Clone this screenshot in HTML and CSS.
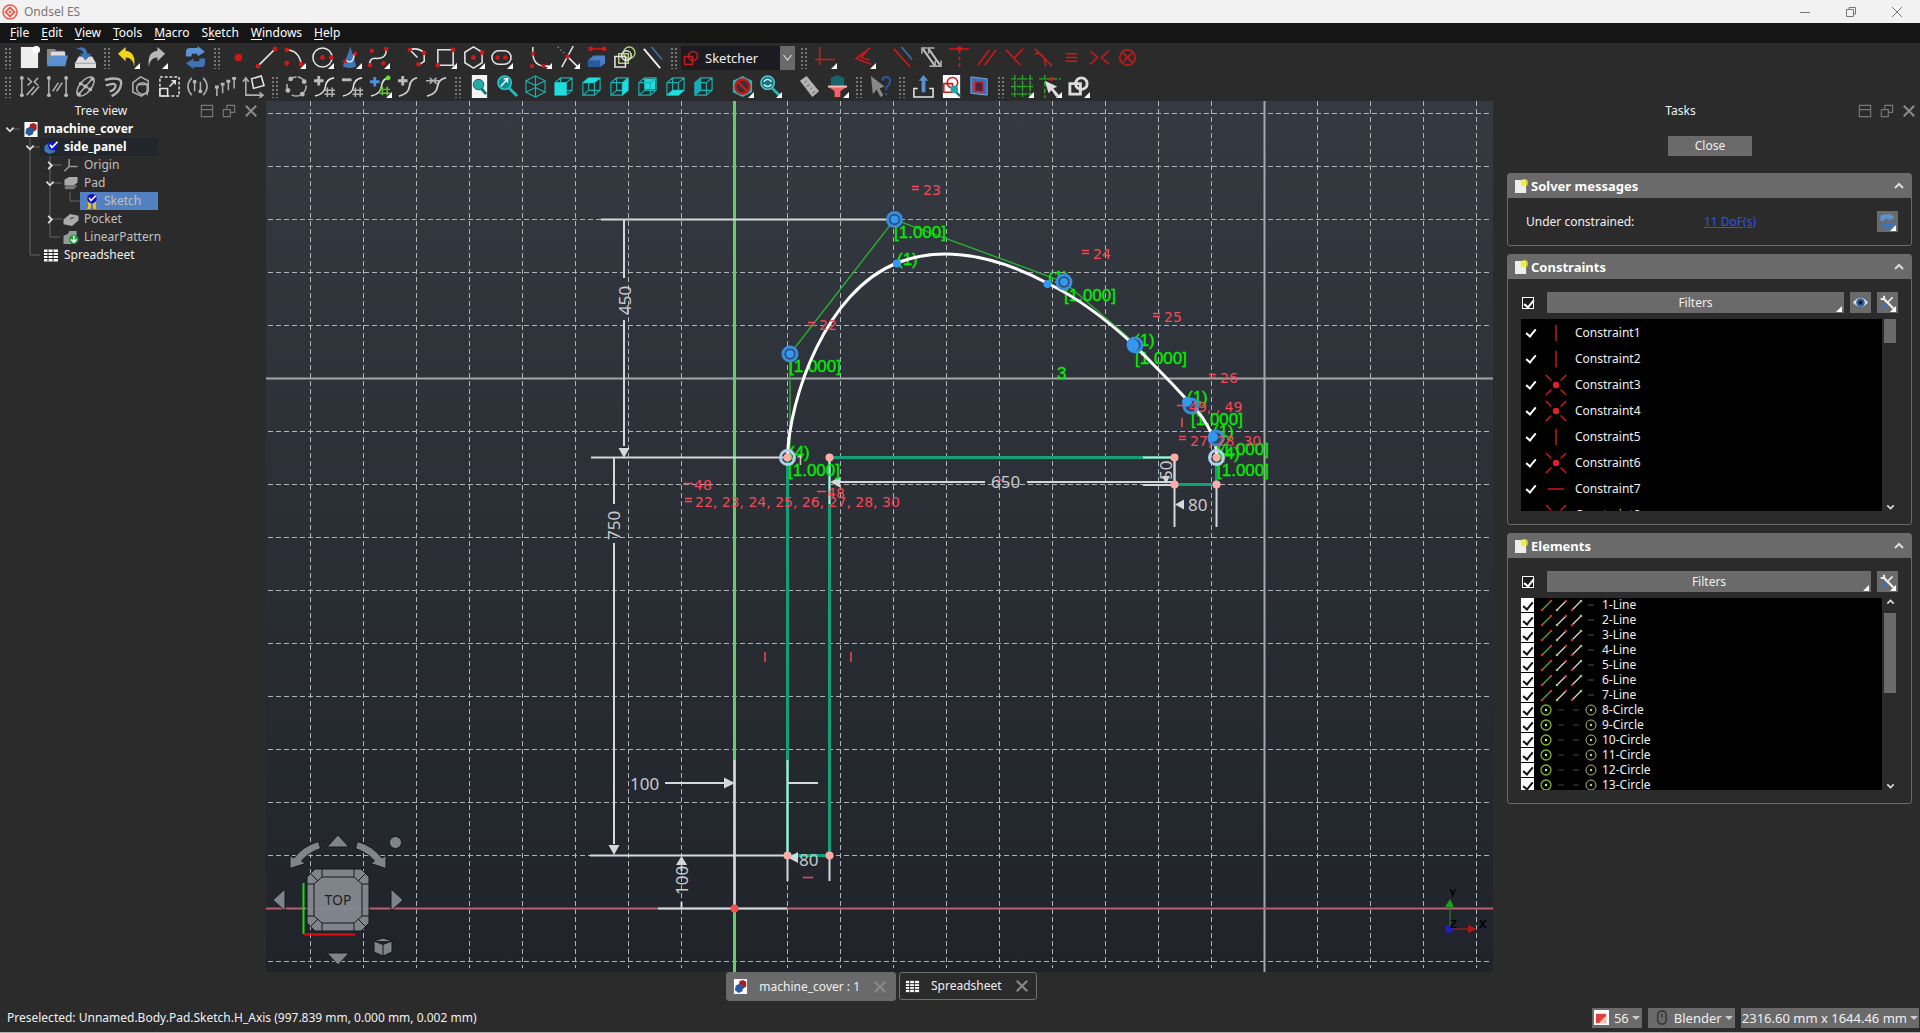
FILE: index.html
```html
<!DOCTYPE html>
<html lang="en">
<head>
<meta charset="utf-8">
<title>Ondsel ES</title>
<link rel="stylesheet" href="styles.css">
</head>
<body>
<svg class="defs" aria-hidden="true">
  <symbol id="cube" viewBox="0 0 24 24"><path class="t" d="M3 8 9 3H21V16L15 21H3ZM3 8H15V21M15 8 21 3M9 3V16H21M9 16 3 21"/></symbol>
  <symbol id="sync" viewBox="0 0 24 24"><path d="M2 11V6a4 4 0 0 1 4-4h8V0l8 6-8 5V8H8v3Z" fill="#5b93d0"/><path d="M22 13v5a4 4 0 0 1-4 4h-8v2l-8-6 8-5v3h6v-3Z" fill="#3f74b6"/></symbol>
  <symbol id="note" viewBox="0 0 14 16"><path d="M0 1H12V15H0Z" fill="#eee"/><circle cx="10" cy="4" r="4" fill="#f0ec20" opacity=".75"/></symbol>
  <symbol id="tools" viewBox="0 0 20 20"><path d="M3 17 10 10" stroke="#3f74b6" stroke-width="3.400"/><path d="M10 10 16 4" stroke="#eee" stroke-width="1.800"/><path d="M6 6 17 17" stroke="#eee" stroke-width="2.600"/><path d="M2 6H6V2" stroke="#eee" stroke-width="2.400" fill="none"/></symbol>
  <symbol id="float" viewBox="0 0 16 16"><path d="M1.500 1.500h13v13h-13ZM1.500 6.500h13" fill="none" stroke="#777" stroke-width="1.300"/></symbol>
  <symbol id="restore" viewBox="0 0 16 16"><path d="M1.500 6.500h8v8h-8ZM5.500 6V1.500h9v8H10" fill="none" stroke="#777" stroke-width="1.300"/></symbol>
  <symbol id="x" viewBox="0 0 16 16"><path d="M2 2 14 14M14 2 2 14" stroke="#8a8a8a" stroke-width="2.400"/></symbol>
  <symbol id="up" viewBox="0 0 10 10"><path d="M1 7 5 3 9 7" fill="none" stroke="#ddd" stroke-width="2"/></symbol>
  <symbol id="down" viewBox="0 0 10 10"><path d="M1 3 5 7 9 3" fill="none" stroke="#ddd" stroke-width="2"/></symbol>
  <symbol id="right" viewBox="0 0 10 10"><path d="M3 1 7 5 3 9" fill="none" stroke="#ddd" stroke-width="2"/></symbol>
  <symbol id="app" viewBox="0 0 14 16"><path d="M0 0H14V16H0Z" fill="#fff"/><path d="M6 2 10 1 13 3 13 8 9 11 5 8Z" fill="#b01c1c"/><path d="M2 7 6 5 10 7 9 13 5 15 1 12Z" fill="#2a5a9e"/></symbol>
  <symbol id="sheet" viewBox="0 0 16 14"><path d="M1 1H15V13H1Z" fill="#fff"/><path d="M1 4H15M1 7H15M1 10H15M5 1V13M10 1V13" stroke="#222"/></symbol>
  <symbol id="vert" viewBox="0 0 24 24"><path class="r" d="M12 3V21"/></symbol>
  <symbol id="horiz" viewBox="0 0 24 24"><path class="r" d="M3 12H21"/></symbol>
  <symbol id="coin" viewBox="0 0 24 24"><path class="r" d="M1 1 7 7M23 1 17 7M1 23 7 17M23 23 17 17"/><circle cx="12" cy="12" r="3.500" fill="#e02030"/></symbol>
  <symbol id="lines" viewBox="0 0 60 15"><g stroke-width="1.200"><path d="M2 13 11 4" stroke="#58b030"/><path d="M17 13 26 4M32 13 41 4" stroke="#e6e0d8"/><path d="M48 8h6" stroke="#444"/></g><g fill="#d03030"><circle cx="2" cy="13" r="1.300"/><circle cx="11" cy="4" r="1.300"/><circle cx="26" cy="4" r="1.300"/><circle cx="32" cy="13" r="1.300"/></g><circle cx="17" cy="13" r="1.300" fill="#9c6"/><circle cx="41" cy="4" r="1.300" fill="#9c6"/></symbol>
  <symbol id="circ" viewBox="0 0 60 15"><g fill="none"><circle cx="6" cy="8" r="5" stroke="#7db82c" stroke-width="1.300"/><circle cx="51" cy="8" r="5" stroke="#b8b878"/><path d="M18 8h6M33 8h6" stroke="#444"/></g><circle cx="6" cy="8" r="1.200" fill="#cf8"/><circle cx="51" cy="8" r="1.200" fill="#cc6"/></symbol>
</svg>

<header class="titlebar">
  <svg class="logo" viewBox="0 0 16 16"><circle cx="8" cy="8" r="7" fill="none" stroke="#ef5a4a" stroke-width="1.500"/><path d="M8 3.500 12.500 8 8 12.500 3.500 8Z" fill="none" stroke="#ef5a4a" stroke-width="1.800"/><circle cx="8" cy="8" r="1.200" fill="#ef5a4a"/></svg>
  <span class="title">Ondsel ES</span>
  <button class="win" aria-label="Minimize"><svg viewBox="0 0 12 12"><path d="M1 6.500H11"/></svg></button>
  <button class="win" aria-label="Restore"><svg viewBox="0 0 12 12"><path d="M1.500 3.500h7v7h-7ZM4 3V1.500h6.500V8H9"/></svg></button>
  <button class="win" aria-label="Close window"><svg viewBox="0 0 12 12"><path d="M1 1 11 11M11 1 1 11"/></svg></button>
</header>

<nav class="menubar">
  <button><u>F</u>ile</button><button><u>E</u>dit</button><button><u>V</u>iew</button><button><u>T</u>ools</button><button><u>M</u>acro</button><button>S<u>k</u>etch</button><button><u>W</u>indows</button><button><u>H</u>elp</button>
</nav>

<div class="toolbars">
  <div class="bar">
    <i class="grip"></i>
    <button class="tool" aria-label="New"><svg viewBox="0 0 24 24"><path d="M3 1H21V23H3Z" fill="#eee"/><circle cx="19" cy="4" r="4" fill="#fff"/></svg></button>
    <button class="tool" aria-label="Open"><svg viewBox="0 0 24 24"><path d="M1 3H9L11 5H19V19H1Z" fill="#888"/><path d="M5 6H20V12H5Z" fill="#ddd"/><path d="M4 10H23L20 21H1Z" fill="#5a8fd0"/></svg></button>
    <button class="tool" aria-label="Save"><svg viewBox="0 0 24 24"><path d="M5 11H19L23 18V23H1V18Z" fill="#ddd"/><path d="M1 18H23" stroke="#999"/><path d="M2 3Q12-2 14 8H18L12 15 6 8H10Q9 3 2 3Z" fill="#3f74b6"/></svg></button>
    <i class="grip"></i>
    <button class="tool drop" aria-label="Undo"><svg viewBox="0 0 24 24"><path d="M1 8 9 1V5Q20 6 18 22 17 12 9 12V16Z" fill="#f0d418"/></svg></button>
    <button class="tool drop" aria-label="Redo"><svg viewBox="0 0 24 24"><path d="M21 8 13 1V5Q2 6 4 22 5 12 13 12V16Z" fill="#b8b8b8"/></svg></button>
    <i class="sep"></i>
    <button class="tool" aria-label="Refresh"><svg><use href="#sync"/></svg></button>
    <i class="grip"></i>
    <button class="tool" aria-label="Point"><svg viewBox="0 0 24 24"><circle class="fr" cx="12" cy="12" r="4"/></svg></button>
    <button class="tool" aria-label="Line"><svg viewBox="0 0 24 24"><path class="w" d="M3 21 21 3"/><circle class="fr" cx="3" cy="21" r="2.500"/><circle class="fr" cx="21" cy="3" r="2.500"/></svg></button>
    <button class="tool drop" aria-label="Arc"><svg viewBox="0 0 24 24"><path class="w" d="M4 4Q17 5 19 19"/><circle class="fr" cx="4" cy="4" r="2.500"/><circle class="fr" cx="4" cy="18" r="2.500"/><circle class="fr" cx="19" cy="19" r="2.500"/></svg></button>
    <button class="tool drop" aria-label="Circle"><svg viewBox="0 0 24 24"><circle class="w" cx="12" cy="12" r="10"/><circle class="fr" cx="12" cy="12" r="2.500"/><circle class="fr" cx="21" cy="12" r="2.500"/></svg></button>
    <button class="tool drop" aria-label="Conic"><svg viewBox="0 0 24 24"><path d="M12 1 18 21Q12 25 4 21Z" fill="#3f74b6"/><path class="w" d="M7 15Q15 20 16 8"/><circle class="fr" cx="6" cy="16" r="2"/><circle class="fr" cx="17" cy="8" r="2"/></svg></button>
    <button class="tool drop" aria-label="B-spline"><svg viewBox="0 0 24 24"><path class="w" d="M3 20Q2 12 10 13 21 13 20 3"/><circle class="fr" cx="3" cy="20" r="2.300"/><circle class="fr" cx="5" cy="5" r="2.300"/><circle class="fr" cx="17" cy="18" r="2.300"/><circle class="fr" cx="20" cy="3" r="2.300"/></svg></button>
    <i class="sep"></i>
    <button class="tool" aria-label="Polyline"><svg viewBox="0 0 24 24"><path class="w" d="M13 20 19 16V7Q12 1 4 4L12 12"/><circle class="fr" cx="4" cy="4" r="2.300"/><circle class="fr" cx="19" cy="7" r="2.300"/><circle class="fr" cx="13" cy="19" r="2.300"/></svg></button>
    <button class="tool drop" aria-label="Rectangle"><svg viewBox="0 0 24 24"><path class="w" d="M4 4H20V20H4Z"/><circle class="fr" cx="20" cy="4" r="2.400"/><circle class="fr" cx="4" cy="20" r="2.400"/></svg></button>
    <button class="tool drop" aria-label="Polygon"><svg viewBox="0 0 24 24"><path class="w" d="M12 1 21 6.500V17.500L12 23 3 17.500V6.500Z"/><circle class="fr" cx="12" cy="12" r="2.500"/><circle class="fr" cx="21" cy="7" r="2.500"/></svg></button>
    <button class="tool drop" aria-label="Slot"><svg viewBox="0 0 24 24"><rect class="w" x="2" y="5" width="20" height="14" rx="7"/><circle class="fr" cx="8" cy="12" r="2.400"/><circle class="fr" cx="16" cy="12" r="2.400"/></svg></button>
    <i class="sep"></i>
    <button class="tool drop" aria-label="Fillet"><svg viewBox="0 0 24 24"><path class="w" d="M4 1V9Q5 19 14 21H21"/><circle class="fr" cx="4" cy="8" r="2.200"/><circle class="fr" cx="3" cy="21" r="2.200"/><circle class="fr" cx="15" cy="21" r="2.200"/></svg></button>
    <button class="tool drop" aria-label="Trim"><svg viewBox="0 0 24 24"><path class="w" d="M17 0 5 22M10 10 22 22"/><path class="g" stroke-dasharray="1 3" d="M1 1 9 9"/><circle class="fr" cx="11" cy="11" r="2.300"/></svg></button>
    <button class="tool" aria-label="External geometry"><svg viewBox="0 0 24 24"><path d="M3 15 9 10H21V18L16 22H3Z" fill="#4a80c8"/><path d="M3 15H16V22H3Z" fill="#2d5a9c"/><path class="r" d="M6 3H18"/><circle class="fr" cx="6" cy="3" r="2.400"/><circle class="fr" cx="20" cy="3" r="2.400"/></svg></button>
    <button class="tool" aria-label="Carbon copy"><svg viewBox="0 0 24 24"><g fill="none" stroke="#b4d070" stroke-width="1.500"><path d="M6 8H16V18H6Z"/><circle cx="17" cy="7" r="6"/></g><path class="w" d="M2 11H13V22H2Z"/><circle class="w" cx="14" cy="10" r="5"/></svg></button>
    <button class="tool" aria-label="Construction"><svg viewBox="0 0 24 24"><path d="M3 3 20 23" stroke="#eee" stroke-width="2"/><path d="M11 1 22 14" stroke="#3f74b6" stroke-width="1.500"/></svg></button>
    <i class="grip"></i>
    <label class="workbench"><svg viewBox="0 0 16 16"><path d="M1.500 6.500h8v8h-8Z" fill="none" stroke="#c81a1a" stroke-width="1.600"/><circle cx="10" cy="6" r="4.500" fill="none" stroke="#c81a1a" stroke-width="1.600"/></svg>
      <select aria-label="Workbench"><option>Sketcher</option></select><svg class="chev" viewBox="0 0 12 12"><path d="M2 3 6 8 10 3" fill="none" stroke="#ddd" stroke-width="1.200"/></svg></label>
    <i class="grip"></i>
    <button class="tool drop" aria-label="Coincident"><svg viewBox="0 0 24 24"><path class="r" d="M6 1V20M1 14H22"/></svg></button>
    <i class="sep"></i>
    <button class="tool drop" aria-label="Dimension"><svg viewBox="0 0 24 24"><path class="r" d="M18 2 3 13 19 19M14 6 8 12 18 15"/></svg></button>
    <i class="sep"></i>
    <button class="tool" aria-label="Symmetric"><svg viewBox="0 0 24 24"><path class="r" d="M2 3 19 22"/><path d="M10 1 21 14" stroke="#3f74b6" stroke-width="1.500"/></svg></button>
    <button class="tool" aria-label="Toggle driving"><svg viewBox="0 0 24 24"><path d="M3 3 15 20M9 3 21 20" stroke="#c4c4c4" stroke-width="2"/><path class="g" d="M2 8V2h6M10 21h6V15M22 15v6h-6M9 8V2h6"/></svg></button>
    <button class="tool" aria-label="Horizontal"><svg viewBox="0 0 24 24"><path class="r" d="M1 3H22"/><path class="r" stroke-dasharray="4 3" d="M12 4V22"/><circle class="fr" cx="12" cy="3" r="2.600"/></svg></button>
    <button class="tool" aria-label="Parallel"><svg viewBox="0 0 24 24"><path class="r" d="M2 20 14 4M9 20 21 4"/></svg></button>
    <button class="tool" aria-label="Perpendicular"><svg viewBox="0 0 24 24"><path class="r" d="M2 4 17 20M10 13 20 3"/></svg></button>
    <button class="tool" aria-label="Tangent curve"><svg viewBox="0 0 24 24"><path class="r" d="M3 3 21 21M3 8Q14 6 14 21"/></svg></button>
    <button class="tool" aria-label="Equal"><svg viewBox="0 0 24 24"><path class="r" d="M6 8H18M6 12H18M6 16H18"/></svg></button>
    <button class="tool" aria-label="Symmetry"><svg viewBox="0 0 24 24"><path class="r" d="M2 5 10 12 2 19M22 5 14 12 22 19"/></svg></button>
    <button class="tool" aria-label="Block"><svg viewBox="0 0 24 24"><circle class="r" cx="12" cy="12" r="8"/><path class="r" d="M7 7 17 17M17 7 7 17"/></svg></button>
  </div>
  <div class="bar">
    <i class="grip"></i>
    <button class="tool" aria-label="Select constraints"><svg viewBox="0 0 24 24"><path class="g" d="M4 3V21M10 3 14 7 10 11M21 3 17 7 21 11M9 21 17 12M14 21 22 12"/><circle class="fg" cx="4" cy="3" r="2"/><circle class="fg" cx="4" cy="21" r="2"/></svg></button>
    <button class="tool" aria-label="Select elements"><svg viewBox="0 0 24 24"><path class="g" d="M3 3V21M21 3V21M7 17 13 8M11 17 17 8"/><circle class="fg" cx="3" cy="3" r="2"/><circle class="fg" cx="3" cy="21" r="2"/><circle class="fg" cx="21" cy="3" r="2"/><circle class="fg" cx="21" cy="21" r="2"/></svg></button>
    <button class="tool" aria-label="Internal geometry"><svg viewBox="0 0 24 24"><ellipse class="g" cx="12" cy="12" rx="12" ry="6" transform="rotate(-50 12 12)"/><path class="g" d="M5 20 19 4M7 9 17 15"/><circle class="fg" cx="12" cy="12" r="2.200"/><circle class="fg" cx="7" cy="9" r="2"/><circle class="fg" cx="17" cy="15" r="2"/><circle class="fg" cx="5" cy="20" r="2"/><circle class="fg" cx="19" cy="4" r="2"/></svg></button>
    <button class="tool" aria-label="Offset"><svg viewBox="0 0 24 24"><path d="M3 5Q21 1 20 9 19 18 10 22M4 11Q15 7 14 12 13 16 8 17" fill="none" stroke="#b4b4b4" stroke-width="2.400"/></svg></button>
    <button class="tool" aria-label="Mirror"><svg viewBox="0 0 24 24"><path class="g" d="M3 8 11 2 19 6V17L12 22 3 18Z"/><circle class="g" cx="13" cy="14" r="6"/><path class="g" d="M8 10H18V21"/></svg></button>
    <button class="tool" aria-label="Scale"><svg viewBox="0 0 24 24"><path class="w" stroke-dasharray="3 2" d="M2 2H22V22H2Z"/><path class="w" d="M2 14H10V22H2ZM12 12 18 6M14 6H18V10"/></svg></button>
    <button class="tool" aria-label="Rotate"><svg viewBox="0 0 24 24"><path class="g" d="M6 3Q-2 12 6 21M18 3Q26 12 18 21M9 7V17M15 7V17"/><circle class="fg" cx="9" cy="7" r="2"/><circle class="fg" cx="15" cy="17" r="2"/></svg></button>
    <button class="tool" aria-label="Array"><svg viewBox="0 0 24 24"><path class="g" d="M3 12V22M9 9V19M15 6V16M21 3V14"/><path class="fg" d="M1 11h4v3H1zM7 8h4v3H7zM13 5h4v3h-4zM19 2h4v3h-4z"/></svg></button>
    <button class="tool" aria-label="Remove alignment"><svg viewBox="0 0 24 24"><path class="g" d="M4 4V21H21M1 7 4 3 7 7M18 18 22 21 18 24"/><path class="w" d="M10 4 20 1 23 11 12 14Z"/></svg></button>
    <i class="grip"></i>
    <button class="tool" aria-label="Convert to NURBS"><svg viewBox="0 0 24 24"><path class="g" stroke-dasharray="9 4" d="M12 2A10 10 0 1 0 22 12 10 10 0 0 0 12 2"/><circle class="fg" cx="6" cy="4" r="2.500"/><circle class="fg" cx="20" cy="7" r="2.500"/><circle class="fg" cx="3" cy="16" r="2.500"/><circle class="fg" cx="18" cy="20" r="2.500"/></svg></button>
    <button class="tool" aria-label="Increase degree"><svg viewBox="0 0 24 24"><path class="w" d="M2 22Q12 20 13 12 14 4 22 3"/><path d="M1 6H11M6 1V11" stroke="#bbb" stroke-width="3"/><path class="g" d="M15 13V23M20 13V23M12 16H23M12 20H23"/></svg></button>
    <button class="tool" aria-label="Decrease degree"><svg viewBox="0 0 24 24"><path class="w" d="M2 22Q12 20 13 12 14 4 22 3"/><path d="M1 5H11" stroke="#bbb" stroke-width="3"/><path class="g" d="M15 13V23M20 13V23M12 16H23M12 20H23"/></svg></button>
    <button class="tool drop" aria-label="Knot multiplicity"><svg viewBox="0 0 24 24"><path class="w" d="M2 22Q12 20 13 12 14 4 20 3"/><path d="M1 7H11M6 2V12" stroke="#4a90e0" stroke-width="3"/><circle cx="20" cy="3" r="2.500" fill="#6d3"/><path d="M14 12V21M19 12V21M11 15H22M11 19H22" stroke="#5c2" stroke-width="1.500"/></svg></button>
    <button class="tool" aria-label="Insert knot"><svg viewBox="0 0 24 24"><path d="M2 22Q12 20 13 12 14 4 21 3" fill="none" stroke="#ccc" stroke-width="2"/><path d="M1 6H11M6 1V11" stroke="#bbb" stroke-width="3"/></svg></button>
    <button class="tool" aria-label="Join curves"><svg viewBox="0 0 24 24"><path d="M2 22Q12 20 13 12 14 4 22 3" fill="none" stroke="#ccc" stroke-width="2"/><path class="g" d="M1 6H9M15 6H8M5 3 8 6 5 9M12 3 9 6 12 9"/></svg></button>
    <i class="grip"></i>
    <button class="tool" aria-label="Fit all"><svg viewBox="0 0 24 24"><path d="M4 0H20V24H4Z" fill="#f4f4f4"/><path d="M13 13 19 20" stroke="#0c7a80" stroke-width="3"/><circle cx="11" cy="10" r="5.500" fill="#28a8a8" stroke="#0c6268"/></svg></button>
    <button class="tool" aria-label="Fit selection"><svg viewBox="0 0 24 24"><path d="M13 13 22 22" stroke="#28b8c0" stroke-width="3"/><circle cx="9" cy="8" r="7" fill="#0c8c94" stroke="#30c8d0" stroke-width="1.500"/><path d="M5 12 12 4M8 4H12V8" stroke="#fff" stroke-width="1.500" fill="none"/></svg></button>
    <button class="tool" aria-label="Isometric"><svg viewBox="0 0 24 24"><path class="t" d="M12 1 22 6V18L12 23 2 18V6ZM2 6 12 11 22 6M12 11V23M12 1V13L2 18M12 13 22 18"/></svg></button>
    <button class="tool" aria-label="Front"><svg viewBox="0 0 24 24"><use href="#cube"/><path class="ft" d="M3 8H15V21H3Z"/></svg></button>
    <button class="tool" aria-label="Top"><svg viewBox="0 0 24 24"><use href="#cube"/><path class="ft" d="M3 8 9 3H21L15 8Z"/></svg></button>
    <button class="tool" aria-label="Right"><svg viewBox="0 0 24 24"><use href="#cube"/><path class="ft" d="M15 8 21 3V16L15 21Z"/></svg></button>
    <button class="tool" aria-label="Rear"><svg viewBox="0 0 24 24"><path class="ft" d="M9 4H20V15H9Z"/><use href="#cube"/></svg></button>
    <button class="tool" aria-label="Bottom"><svg viewBox="0 0 24 24"><use href="#cube"/><path class="ft" d="M3 21 9 16H21L15 21Z"/></svg></button>
    <button class="tool" aria-label="Left"><svg viewBox="0 0 24 24"><path d="M3 8 9 3V16L3 21Z" fill="#159"/><path class="ft" opacity=".6" d="M3 8 9 3V16L3 21Z"/><use href="#cube"/></svg></button>
    <i class="sep"></i>
    <button class="tool drop" aria-label="Draw style"><svg viewBox="0 0 24 24"><path d="M12 1 22 6V18L12 23 2 18V6Z" fill="#28b8c0"/><circle cx="12" cy="12" r="7.500" fill="#333" stroke="#d01818" stroke-width="2.500"/><path d="M7 7 17 17" stroke="#d01818" stroke-width="2.500"/></svg></button>
    <button class="tool drop" aria-label="Zoom"><svg viewBox="0 0 24 24"><path d="M14 14 22 22" stroke="#28b8c0" stroke-width="3"/><circle cx="9" cy="8" r="7" fill="#0f7880" stroke="#58c8cc" stroke-width="1.500"/><path d="M5 7q4-5 8 0M13 10q-4 4-8 0" stroke="#d8eeee" stroke-width="1.500" fill="none"/></svg></button>
    <i class="sep"></i>
    <button class="tool" aria-label="Measure"><svg viewBox="0 0 24 24"><path d="M2 6 9 1 22 17 15 23Z" fill="#b4b4b4"/><path d="M9 6 7 8M12 10 9 12M15 13 13 15M18 17 15 19" stroke="#555"/></svg></button>
    <button class="tool drop" aria-label="Filter"><svg viewBox="0 0 24 24"><path d="M5 3 12 0 19 3V12H5Z" fill="#14666a"/><path d="M2 12H22L15 17V23H9V17Z" fill="#f06468"/><path d="M2 12H22" stroke="#fbb" stroke-width="2"/></svg></button>
    <i class="grip"></i>
    <button class="tool" aria-label="What's this"><svg viewBox="0 0 24 24"><path d="M2 1 4 20 8 15 12 23 15 21 11 14 16 12Z" fill="#888"/><path d="M14 6Q14 2 18 2 22 2 22 6T18 13V16M18 19V21" fill="none" stroke="#2d5a9c" stroke-width="2"/></svg></button>
    <i class="grip"></i>
    <button class="tool" aria-label="Leave sketch"><svg viewBox="0 0 24 24"><path class="w" d="M6 14H2V23H22V14H18"/><path d="M12 0 17 6H14V18H10V6H7Z" fill="#5a8fd0"/></svg></button>
    <button class="tool" aria-label="View sketch"><svg viewBox="0 0 24 24"><path d="M3 0H21V24H3Z" fill="#fff"/><path class="r" d="M4 9H13V18H4Z"/><circle class="r" cx="13" cy="8" r="5.500"/><circle cx="15" cy="15" r="4" fill="#20a8b0"/><path d="M17 18 21 22" stroke="#0c7a80" stroke-width="2.500"/></svg></button>
    <button class="tool" aria-label="View section"><svg viewBox="0 0 24 24"><path d="M3 2 20 4V21L3 19Z" fill="#3d6cb4" stroke="#7ca8e0"/><path d="M7 7H16V18L7 17Z" fill="#50243a" stroke="#e02828" stroke-width="1.500"/></svg></button>
    <i class="grip"></i>
    <button class="tool drop" aria-label="Grid"><svg viewBox="0 0 24 24"><path d="M4 0V24M12 0V24M20 0V24M0 4H24M0 12H24M0 20H24" stroke="#2fa82f" stroke-width="1.400" stroke-dasharray="5 1"/></svg></button>
    <button class="tool drop" aria-label="Snap"><svg viewBox="0 0 24 24"><path d="M6 0V24M0 4H23" stroke="#2fa82f" stroke-width="1.400" stroke-dasharray="5 2"/><circle class="fr" cx="13" cy="4" r="2.200"/><path d="M6 6 19 12 15 14 21 21 18 23 13 16 10 19Z" fill="#ddd"/></svg></button>
    <button class="tool drop" aria-label="Rendering order"><svg viewBox="0 0 24 24"><path d="M3 9H14V20H3Z" fill="none" stroke="#ddd" stroke-width="3"/><circle cx="15" cy="9" r="6" fill="none" stroke="#ddd" stroke-width="3"/></svg></button>
  </div>
</div>

<main>
  <aside class="dock left">
    <div class="docktitle"><h2>Tree view</h2><button aria-label="Float"><svg><use href="#float"/></svg></button><button aria-label="Restore"><svg><use href="#restore"/></svg></button><button aria-label="Close"><svg><use href="#x"/></svg></button></div>
    <div class="treewrap">
      <svg class="links" viewBox="0 0 158 144"><path d="M30 18V135H40M50 36V117H60M70 72V81H80M50 45H62M50 63H62M50 99H62M12 9H20M32 27H40"/></svg>
      <ul class="tree">
        <li><svg class="arrow"><use href="#down"/></svg><span class="node bold"><svg><use href="#app"/></svg>machine_cover</span></li>
        <li class="d1"><svg class="arrow"><use href="#down"/></svg><span class="node bold active"><svg viewBox="0 0 16 16"><path d="M1 6 7 3 13 6 12 13 6 15 1 12Z" fill="#3f74b6"/><circle cx="10" cy="6" r="5" fill="#1010d0"/><path d="M7 5 9 8 15 2" fill="none" stroke="#fff" stroke-width="1.800"/></svg>side_panel</span></li>
        <li class="d2"><svg class="arrow"><use href="#right"/></svg><span class="node dim"><svg viewBox="0 0 16 16"><path d="M6 1V9H15M6 9 1 14" fill="none" stroke="#999" stroke-width="1.600"/></svg>Origin</span></li>
        <li class="d2"><svg class="arrow"><use href="#down"/></svg><span class="node dim"><svg viewBox="0 0 16 16"><path d="M1 4 6 1H15V7L11 10H1Z" fill="#aaa"/><path d="M1 12 4 10H15L11 14H2Z" fill="#777"/></svg>Pad</span></li>
        <li class="d3"><span class="arrow"></span><span class="node dim selected"><svg viewBox="0 0 16 16"><path d="M4 8H7Q9 12 7 16H4Q6 12 4 8M14 8H11Q9 12 11 16H14Q12 12 14 8" fill="#f0c020"/><circle cx="9" cy="5" r="5" fill="#1010d0"/><path d="M6 4 8 7 13 2" fill="none" stroke="#fff" stroke-width="1.600"/></svg>Sketch</span></li>
        <li class="d2"><svg class="arrow"><use href="#right"/></svg><span class="node dim"><svg viewBox="0 0 16 16"><path d="M0 8 7 2 16 4V9L9 15 0 13Z" fill="#aaa"/><path d="M6 7 10 5 12 6 8 8Z" fill="#666"/></svg>Pocket</span></li>
        <li class="d2"><span class="arrow"></span><span class="node dim"><svg viewBox="0 0 16 16"><path d="M0 6 5 4 6 1H14V7L8 15H0Z" fill="#999"/><circle cx="11" cy="10" r="5" fill="#18a030"/><path d="M11 6V13M8 10 11 13 14 10" stroke="#fff" stroke-width="1.600" fill="none"/></svg>LinearPattern</span></li>
        <li class="d1"><span class="arrow"></span><span class="node"><svg><use href="#sheet"/></svg>Spreadsheet</span></li>
      </ul>
    </div>
  </aside>

  <section class="center">
    <svg class="view" viewBox="266 101 1227 871" preserveAspectRatio="xMidYMid slice">
      <path class="grid" d="M310.500 101V968M363.500 101V968M416.500 101V968M469.500 101V968M522.500 101V968M575.500 101V968M628.500 101V968M681.500 101V968M787.500 101V968M840.500 101V968M893.500 101V968M946.500 101V968M999.500 101V968M1052.500 101V968M1105.500 101V968M1158.500 101V968M1211.500 101V968M1317.500 101V968M1370.500 101V968M1423.500 101V968M1476.500 101V968M268 113.500H1490M268 166.500H1490M268 219.500H1490M268 272.500H1490M268 325.500H1490M268 431.500H1490M268 484.500H1490M268 537.500H1490M268 590.500H1490M268 643.500H1490M268 696.500H1490M268 749.500H1490M268 802.500H1490M268 855.500H1490M268 961.500H1490"/>
      <path d="M266 378.500H1493M1264.500 101V972" stroke="#a4a6aa" stroke-width="2"/>
      <path d="M266 908.500H1493" stroke="#b8606c" stroke-width="2"/>
      <path d="M734.500 101V972" stroke="#5fd068" stroke-width="3"/>
      <g class="poly"><path d="M790 457V354L894.500 219.500 1064 282 1136 344 1192 407 1215 437 1216.500 457"/></g>
      <path d="M787.500 457V855.500H829.500V457.500H1174.500V484.500H1216.500V457" fill="none" stroke="#12a07a" stroke-width="3"/>
      <g class="dim">
        <path d="M601 219.500H894M624 220V278M624 320V446M591 457.500H787M614 458V504M614 543V844M590 855.500H787"/>
        <path d="M734.500 760V908M665 783H724M787.500 760V881M787.500 783H818M829.500 856V881M681.500 866V871M681.500 902V908M658 908.500H787"/>
        <path d="M829.500 458V504M840 482H985M1027 482H1174M1143 457.500H1174M1143 485H1174M1174.500 458V527M1216.500 485V527"/>
        <g class="head"><path d="M618.500 448H629.500L624 458ZM608.500 845H619.500L614 855ZM724 777.500V788.500L735 783ZM687 865H676L681.500 856ZM788 857.500 798 852V863ZM830 482 840 477V487.500ZM1175 504.500 1184 499.500V509.500ZM1162 476H1170L1166 484Z"/></g>
        <text transform="translate(631 315) rotate(-90)">450</text>
        <text transform="translate(620 540) rotate(-90)">750</text>
        <text transform="translate(688 895) rotate(-90)">100</text>
        <text transform="translate(1172 480) rotate(-90)">50</text>
        <text x="630" y="790">100</text><text x="799" y="866">80</text><text x="991" y="488">650</text><text x="1188" y="511">80</text>
      </g>
      <g class="weights">
        <text x="894" y="238">[1.000]</text><text x="897" y="265">(1)</text><text x="789" y="372">[1.000]</text><text x="789" y="458">(4)</text><text x="788" y="476">[1.000]</text>
        <text x="1048" y="283">(1)</text><text x="1064" y="301">[1.000]</text><text x="1134" y="346">(1)</text><text x="1135" y="364">[1.000]</text><text x="1187" y="403">(1)</text><text x="1191" y="425">[1.000]</text><text x="1213" y="437">(1)</text><text x="1217" y="455">[1.000]</text><text x="1219" y="459">(4)</text><text x="1217" y="476">[1.000]</text><text x="1057" y="379">3</text>
      </g>
      <path d="M787.500 457.500C789 398 826 291 897 263 930 250 980 247 1048 283.500 1080 299 1107 320 1134 345 1152 363 1172 383 1188 401 1199 411 1208 425 1213 437 1216 445 1217 451 1216.500 457.500" fill="none" stroke="#fff" stroke-width="3"/>
      <g class="poles"><circle cx="790" cy="354" r="7"/><circle cx="894.500" cy="219.500" r="7"/><circle cx="1064" cy="282" r="7"/><circle cx="1135" cy="345" r="7"/><circle cx="1191" cy="406" r="7"/><circle cx="1216" cy="438" r="7"/></g>
      <g fill="#3498f0"><circle cx="790" cy="354" r="4"/><circle cx="894.500" cy="219.500" r="4"/><circle cx="1064" cy="282" r="4"/><circle cx="897" cy="263.500" r="4"/><circle cx="1047.500" cy="284" r="4"/><circle cx="1133" cy="345.500" r="6"/><circle cx="1187" cy="402" r="5"/><circle cx="1213" cy="437" r="5"/></g>
      <g fill="none" stroke="#b4d0f0" stroke-width="3"><circle cx="787.500" cy="457.500" r="7"/><circle cx="1216.500" cy="457.500" r="7"/></g>
      <text class="one" x="796" y="465">1</text>
      <g fill="#ffaca8"><circle cx="787.500" cy="457.500" r="4"/><circle cx="829.500" cy="457.500" r="4"/><circle cx="1174.500" cy="457.500" r="4"/><circle cx="1216.500" cy="457.500" r="4"/><circle cx="1174.500" cy="484.500" r="4"/><circle cx="1216.500" cy="484.500" r="4"/><circle cx="787.500" cy="855.500" r="4"/><circle cx="829.500" cy="855.500" r="4"/></g>
      <circle cx="734.500" cy="908.500" r="4" fill="#f05048"/>
      <g class="cons">
        <path d="M912 186.500h7M912 189.500h7M808 322.500h7M808 325.500h7M683 483.500h10M817 491.500h9M685 498.500h7M685 501.500h7M1082 250.500h7M1082 253.500h7M1153 313.500h7M1153 316.500h7M1209 374.500h7M1209 377.500h7M1177 405.500h9M1182 418V427M1179 436.500h7M1179 439.500h7M765 652V662M851 652V662M803 877.500h10M998 480h4"/>
        <text x="923" y="195">23</text><text x="819" y="330">22</text><text x="694" y="490">48</text><text x="827" y="498">48</text><text x="695" y="507">22, 23, 24, 25, 26, 27, 28, 30</text>
        <text x="1093" y="259">24</text><text x="1164" y="322">25</text><text x="1220" y="383">26</text><text x="1189" y="412">49, , 49</text><text x="1190" y="446">27, 28, 30</text>
      </g>
      <g class="navcube">
        <path d="M338 835 349 847H327ZM327 953H349L338 965ZM273 900 285 889V911ZM403 900 391 889V911Z"/>
        <circle cx="395.500" cy="842.500" r="6"/>
        <path d="M318.500 841.500Q303 846 294 858L290 855.500V868.500L305.500 863.500 301.500 861Q308 853 320.500 848.500ZM357.500 841.500Q373 846 382 858L386 855.500V868.500L370.500 863.500 374.500 861Q368 853 355.500 848.500Z"/>
        <path d="M315 869H361L369 877V923L361 931H315L307 923V877ZM322 877H354L362 884V916L354 923H322L314 916V884ZM322 869V877M354 869V877M322 923V931M354 923V931M307 884H314M362 884H369M307 916H314M362 916H369M310 873 318 881M366 873 358 881M310 927 318 919M366 927 358 919"/>
        <path d="M374 941 383 938 392 941V952L383 956 374 952ZM374 941 383 944.500 392 941M383 944.500V956"/>
        <text x="338" y="905">TOP</text>
      </g>
      <path d="M303.500 883V934" stroke="#10e010" stroke-width="2"/><path d="M304 934.500H355" stroke="#e01010" stroke-width="2"/>
      <g class="triad"><path d="M1450 928V905" stroke="#2a8a38"/><path d="M1445 907H1454L1450 899Z" fill="#18a018"/><path d="M1450 929H1470" stroke="#b82020"/><path d="M1468 925V933L1477 929Z" fill="#b01818"/><circle cx="1449" cy="929" r="4" fill="#2020b8"/><text x="1449" y="897">Y</text><text x="1450" y="928">Z</text><text x="1479" y="928">X</text></g>
    </svg>
    <div class="tabs">
      <div class="tab current"><svg><use href="#app"/></svg><span>machine_cover : 1</span><button aria-label="Close tab"><svg><use href="#x"/></svg></button></div>
      <div class="tab"><svg><use href="#sheet"/></svg><span>Spreadsheet</span><button aria-label="Close tab"><svg><use href="#x"/></svg></button></div>
    </div>
  </section>

  <aside class="dock right">
    <div class="docktitle"><h2>Tasks</h2><button aria-label="Float"><svg><use href="#float"/></svg></button><button aria-label="Restore"><svg><use href="#restore"/></svg></button><button aria-label="Close"><svg><use href="#x"/></svg></button></div>
    <button class="close">Close</button>
    <section class="panel">
      <h3><svg class="ph"><use href="#note"/></svg><span>Solver messages</span><svg class="fold"><use href="#up"/></svg></h3>
      <div class="solver"><span class="state">Under constrained:</span><a href="#dofs">11 DoF(s)</a><button class="sq drop" aria-label="Update"><svg><use href="#sync"/></svg></button></div>
    </section>
    <section class="panel">
      <h3><svg class="ph"><use href="#note"/></svg><span>Constraints</span><svg class="fold"><use href="#up"/></svg></h3>
      <div class="filters"><input class="box" type="checkbox" checked aria-label="Filter constraints"><button class="filter drop">Filters</button><button class="sq" aria-label="Visibility"><svg viewBox="0 0 20 20"><path d="M1 10Q10-1 19 10 10 20 1 10" fill="#cfe0f4"/><circle cx="10" cy="10" r="5" fill="#2d5a9c"/><circle cx="10" cy="10" r="2" fill="#111"/></svg></button><button class="sq drop" aria-label="Settings"><svg><use href="#tools"/></svg></button></div>
      <div class="listrow">
        <ul class="list cl">
          <li><label><input type="checkbox" checked><svg><use href="#vert"/></svg>Constraint1</label></li>
          <li><label><input type="checkbox" checked><svg><use href="#vert"/></svg>Constraint2</label></li>
          <li><label><input type="checkbox" checked><svg><use href="#coin"/></svg>Constraint3</label></li>
          <li><label><input type="checkbox" checked><svg><use href="#coin"/></svg>Constraint4</label></li>
          <li><label><input type="checkbox" checked><svg><use href="#vert"/></svg>Constraint5</label></li>
          <li><label><input type="checkbox" checked><svg><use href="#coin"/></svg>Constraint6</label></li>
          <li><label><input type="checkbox" checked><svg><use href="#horiz"/></svg>Constraint7</label></li>
          <li><label><input type="checkbox" checked><svg><use href="#coin"/></svg>Constraint8</label></li>
        </ul>
        <div class="scroll"><span class="thumb short"></span><svg><use href="#down"/></svg></div>
      </div>
    </section>
    <section class="panel">
      <h3><svg class="ph"><use href="#note"/></svg><span>Elements</span><svg class="fold"><use href="#up"/></svg></h3>
      <div class="filters"><input class="box" type="checkbox" checked aria-label="Filter elements"><button class="filter drop">Filters</button><button class="sq drop" aria-label="Settings"><svg><use href="#tools"/></svg></button></div>
      <div class="listrow">
        <ul class="list el">
          <li><label><input type="checkbox" checked><svg><use href="#lines"/></svg>1-Line</label></li>
          <li><label><input type="checkbox" checked><svg><use href="#lines"/></svg>2-Line</label></li>
          <li><label><input type="checkbox" checked><svg><use href="#lines"/></svg>3-Line</label></li>
          <li><label><input type="checkbox" checked><svg><use href="#lines"/></svg>4-Line</label></li>
          <li><label><input type="checkbox" checked><svg><use href="#lines"/></svg>5-Line</label></li>
          <li><label><input type="checkbox" checked><svg><use href="#lines"/></svg>6-Line</label></li>
          <li><label><input type="checkbox" checked><svg><use href="#lines"/></svg>7-Line</label></li>
          <li><label><input type="checkbox" checked><svg><use href="#circ"/></svg>8-Circle</label></li>
          <li><label><input type="checkbox" checked><svg><use href="#circ"/></svg>9-Circle</label></li>
          <li><label><input type="checkbox" checked><svg><use href="#circ"/></svg>10-Circle</label></li>
          <li><label><input type="checkbox" checked><svg><use href="#circ"/></svg>11-Circle</label></li>
          <li><label><input type="checkbox" checked><svg><use href="#circ"/></svg>12-Circle</label></li>
          <li><label><input type="checkbox" checked><svg><use href="#circ"/></svg>13-Circle</label></li>
        </ul>
        <div class="scroll"><svg><use href="#up"/></svg><span class="thumb"></span><svg><use href="#down"/></svg></div>
      </div>
    </section>
  </aside>
</main>

<footer class="status">
  <span class="msg">Preselected: Unnamed.Body.Pad.Sketch.H_Axis (997.839 mm, 0.000 mm, 0.002 mm)</span>
  <button class="chip"><svg viewBox="0 0 16 16"><path d="M0 0H16V16H0Z" fill="#fff"/><path d="M2 4H13V14H2Z" fill="#e04040"/><path d="M13 6V14H5Z" fill="#f0c0b8"/></svg>56<i class="caret"></i></button>
  <label class="chip nav"><svg viewBox="0 0 16 16"><rect x="4" y="1" width="9" height="14" rx="4" fill="none" stroke="#333" stroke-width="1.500"/><path d="M8.500 4V8" stroke="#333" stroke-width="1.500"/></svg><select aria-label="Navigation style"><option>Blender</option></select><i class="caret"></i></label>
  <button class="chip size">2316.60 mm x 1644.46 mm<i class="caret"></i></button>
</footer>
</body>
</html>
```
FILE: styles.css
```css
* { box-sizing: border-box; }
body { margin: 0; height: 100vh; display: flex; flex-direction: column; overflow: hidden; background: #2b2b2b; color: #f0f0f0; font: 12px/18px "Noto Sans", "Open Sans", sans-serif; border-bottom: 1px solid #b0b0b0; }
button, select, input { font: inherit; color: inherit; margin: 0; padding: 0; border: 0; background: none; }
h2, h3, ul { margin: 0; padding: 0; font: inherit; list-style: none; }
svg { display: block; flex: none; }
.defs { position: absolute; width: 0; height: 0; }

.r { fill: none; stroke: #d01818; stroke-width: 1.6; }
.w { fill: none; stroke: #e4e4e4; stroke-width: 1.6; }
.g { fill: none; stroke: #b0b0b0; stroke-width: 1.6; }
.t { fill: none; stroke: #17b3b3; stroke-width: 1.2; }
.fr { fill: #d01818; }
.fg { fill: #b8b8b8; }
.ft { fill: #20dcdc; }

.titlebar { display: flex; align-items: center; height: 23px; background: #f2f2f2; color: #777; flex: none; }
.logo { width: 16px; height: 16px; margin: 0 6px 0 2px; }
.title { flex: 1; }
.win { width: 46px; display: flex; justify-content: center; }
.win svg { width: 12px; height: 12px; fill: none; stroke: #777; }

.menubar { display: flex; align-items: center; height: 20px; padding: 0 4px; background: #151515; flex: none; }
.menubar button { padding: 0 6px; color: #fff; }
.menubar u { text-underline-offset: 2px; }

.toolbars { flex: none; background: #2b2b2b; }
.bar { display: flex; align-items: center; height: 29px; }
.grip { flex: none; width: 15px; height: 22px; display: flex; background: radial-gradient(circle, #777 1px, transparent 1px) 0 0 / 4px 4px; border: 0 solid transparent; border-width: 0 3px 0 4px; background-clip: padding-box; }
.sep { flex: none; width: 11px; }
.tool { position: relative; flex: none; width: 28px; height: 24px; display: flex; justify-content: center; align-items: center; }
.tool svg { width: 23px; height: 23px; }
.drop { position: relative; }
.drop::after { content: ""; position: absolute; right: 2px; bottom: 1px; border: 3px solid transparent; border-right-color: #fff; border-bottom-color: #fff; }
.workbench { display: flex; align-items: center; flex: none; width: 114px; height: 24px; margin: 0 1px 0 0; background: #1c1b22; }
.workbench > svg { width: 16px; height: 16px; margin: 0 6px 0 2px; }
.workbench select { flex: 1; appearance: none; font-size: 13px; min-width: 0; }
.workbench .chev { width: 15px; height: 24px; margin: 0; padding: 6px 1px; background: #6a6a6a; }

main { display: flex; flex: 1; min-height: 0; }
.dock { flex: none; }
.left { width: 266px; padding-right: 4px; }
.right { width: 427px; padding-left: 14px; display: flex; flex-direction: column; }
.docktitle { display: flex; align-items: center; height: 19px; }
.docktitle h2 { flex: 1; text-align: center; }
.docktitle button { width: 22px; height: 19px; display: flex; align-items: center; justify-content: center; }
.docktitle svg { width: 14px; height: 14px; }
.left .docktitle h2 { padding-left: 6px; }

.treewrap { position: relative; width: 158px; }
.links { position: absolute; left: 0; top: 0; width: 158px; height: 144px; fill: none; stroke: #666; }
.tree { position: relative; }
.tree li { display: flex; height: 18px; align-items: center; }
.tree .d1 { padding-left: 20px; }
.tree .d2 { padding-left: 40px; }
.tree .d3 { padding-left: 60px; }
.arrow { flex: none; width: 20px; height: 9px; }
.node { display: flex; flex: 1; align-items: center; gap: 5px; height: 18px; padding-left: 3px; white-space: nowrap; }
.node svg { width: 16px; height: 15px; }
.bold { font-weight: bold; color: #fff; }
.node.dim { color: #c0c0c0; }
.active { background: #22262c; }
.selected { background: #5380c0; }

.center { flex: 1; min-width: 0; display: flex; flex-direction: column; }
.view { flex: 1; min-height: 0; width: 100%; background: linear-gradient(#353941, #20232a); }
.grid { fill: none; stroke: #b0b3b8; stroke-width: 1; stroke-dasharray: 5 3; }
.poly path { fill: none; stroke: #28b030; stroke-width: 1.4; }
.view .dim { fill: #c8cacc; }
.view .dim path { fill: none; stroke: #d4d8da; stroke-width: 2; }
.view .dim .head path { fill: #d4d8da; stroke: none; }
.view .dim text { font-size: 17px; }
.weights { fill: #00f000; stroke: #00f000; stroke-width: .3; font: 17px "Liberation Sans", sans-serif; }
.poles { fill: #2b4564; stroke: #3a8cdc; stroke-width: 3; }
.one { font-size: 14px; fill: #ddd; }
.cons { font: 14px "DejaVu Sans", sans-serif; fill: #f84854; }
.cons path { stroke: #f84854; stroke-width: 1.5; }
.navcube { fill: #858990; stroke: #16181c; stroke-width: 1; fill-opacity: .95; }
.navcube text { font-size: 14px; stroke: none; fill: #16181c; text-anchor: middle; }
.triad { font: bold 11px "Liberation Sans", sans-serif; fill: #000; }

.tabs { flex: none; display: flex; justify-content: center; gap: 3px; padding-left: 4px; height: 31px; align-items: flex-start; }
.tab { display: flex; align-items: center; height: 28px; padding: 0 5px; border: 1px solid #707070; border-radius: 3px; }
.tab > svg { width: 15px; height: 15px; margin-right: 11px; }
.tab button svg { width: 14px; height: 14px; margin: 0 2px 0 13px; }
.current { height: 29px; padding: 0 6px; background: #6a6a6a; border-color: #6a6a6a; }

.close { width: 84px; height: 20px; margin: 16px 0 17px 161px; background: #6a6a6a; }
.panel { margin: 0 8px 8px 0; border: 1px solid #6a6a6a; border-radius: 3px; }
.panel h3 { display: flex; align-items: center; height: 24px; padding: 0 7px; background: #6a6a6a; color: #fff; font-weight: bold; font-size: 13px; }
.ph { width: 13px; height: 15px; margin-right: 3px; }
.panel h3 span { flex: 1; }
.fold { width: 10px; height: 10px; }
.solver { display: flex; align-items: center; height: 47px; padding: 0 13px 0 18px; }
.state { width: 178px; }
.solver a { flex: 1; color: #2f55e8; }
.sq { width: 21px; height: 21px; background: #6a6a6a; display: flex; align-items: center; justify-content: center; }
.sq svg { width: 17px; height: 17px; }
.filters { display: flex; align-items: center; gap: 6px; padding: 13px 13px 6px 14px; }
.box { appearance: none; width: 12px; height: 12px; margin-right: 7px; border: 1px solid #fff; background: #1c1c1c; }
.filter { flex: 1; height: 21px; background: #6a6a6a; }
.listrow { display: flex; gap: 2px; padding: 0 15px 13px 13px; }
.list { flex: 1; height: 192px; overflow: hidden; background: #000; }
.list label { display: flex; align-items: center; }
.list input { appearance: none; flex: none; display: block; }
.box::before, .list input::before { content: ""; display: block; width: 4px; height: 8px; border: solid #fff; border-width: 0 2px 2px 0; transform: rotate(40deg); margin: 0 0 0 3px; }
.cl li { height: 26px; }
.cl label { height: 28px; }
.cl input { width: 12px; margin-left: 4px; height: 12px; }
.cl svg { width: 22px; height: 22px; margin: 0 8px; }
.list.el li { height: 15px; }
.list.el label { height: 14px; line-height: 12px; }
.el input { width: 13px; height: 14px; background: #fff; padding: 2px 1px; }
.list.el input::before { border-color: #111; }
.el svg { width: 60px; height: 15px; margin: 0 2px 0 6px; }
.list.el label { padding-bottom: 1px; }
.scroll { width: 12px; display: flex; flex-direction: column; align-items: center; justify-content: space-between; }
.scroll svg { width: 11px; height: 8px; }
.thumb { width: 12px; height: 80px; margin-bottom: 82px; background: #6a6a6a; }
.short { height: 24px; margin: 0; }

.status { flex: none; display: flex; align-items: center; gap: 6px; height: 29px; padding: 0 1px 0 7px; }
.msg { flex: 1; }
.chip { display: flex; align-items: center; height: 20px; padding: 0 2px; background: #6a6a6a; font-size: 13px; white-space: nowrap; }
.chip svg { width: 15px; height: 15px; margin-right: 5px; }
.chip select { appearance: none; width: 48px; }
.nav { padding-left: 6px; }
.size { padding: 0 1px; }
.caret { border: 4px solid transparent; border-top-color: #ccc; border-bottom: 0; margin-left: 3px; }
```
